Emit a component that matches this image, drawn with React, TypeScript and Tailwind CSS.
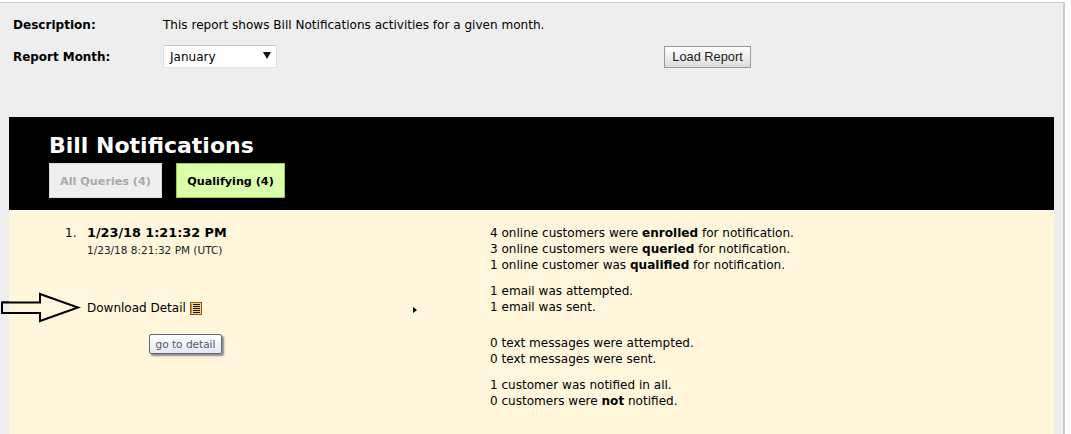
export default function App() {
  return (
    <div className="h-[434px] w-[1071px] overflow-hidden bg-white text-[12.05px] leading-[16px] text-black [font-family:'DejaVu_Sans',sans-serif]">
      <div className="relative mt-[2px] flex h-[432px] w-[1065px] flex-col border-t-[1px] border-r-[2px] border-[#cccccc] bg-[#eeeeee] pl-[9px] pr-[9px]">
        <div className="flex h-[114px] flex-col">
          <div className="mt-[14px] flex h-[16px] items-center">
            <div className="w-[154px] pl-[4px] font-bold">Description:</div>
            <div>This report shows Bill Notifications activities for a given month.</div>
          </div>
          <div className="mt-[12px] flex items-center">
            <div className="w-[154px] pl-[4px] text-[11.95px] font-bold">Report Month:</div>
            <div className="flex h-[23px] w-[114px] items-center justify-between border border-[#dde3ea] border-t-[#c4c4c4] bg-white pl-[6px] pr-[5px]">
              <span>January</span>
              <svg width="8" height="7" viewBox="0 0 8 7" className="mb-[2px]"><path d="M0 0h8L4 7z" fill="#111" /></svg>
            </div>
            <button className="ml-[387px] h-[22px] w-[87px] border border-[#999999] bg-gradient-to-b from-white to-[#dcdcdc] text-[12.8px] text-[#222] [font-family:'Liberation_Sans',sans-serif]">
              Load Report
            </button>
          </div>
        </div>
        <div className="h-[93px] bg-black pl-[40px] pt-[15px]">
          <h1 className="text-[22px] font-bold leading-[28px] text-white">Bill Notifications</h1>
          <div className="mt-[3px] flex gap-[14px]">
            <div className="flex h-[35px] w-[113px] items-center justify-center border border-[#dddddd] bg-[#eeeeee] pt-[2px] text-[11.2px] font-bold text-[#aaaaaa]">All Queries (4)</div>
            <div className="flex h-[35px] w-[109px] items-center justify-center border border-[#99cc44] bg-[#d9ffaa] pt-[2px] text-[11.2px] font-bold text-black">Qualifying (4)</div>
          </div>
        </div>
        <div className="flex flex-1 bg-[#fff6dc] pt-[15px]">
          <div className="flex w-[481px] pl-[56px]">
            <div className="w-[22px]">1.</div>
            <div>
              <div className="text-[12.8px] font-bold leading-[16px]">1/23/18 1:21:32 PM</div>
              <div className="mt-[2px] text-[10.5px] leading-[14px] text-[#222]">1/23/18 8:21:32 PM (UTC)</div>
              <div className="mt-[43px] flex items-center gap-[4px] text-[12px]">
                Download Detail
                <svg width="12" height="13" viewBox="0 0 12 13">
                  <rect x="0.5" y="0.5" width="11" height="12" fill="#f8d48a" stroke="#8a5a14" />
                  <path d="M3 2.5h7M3 4.5h7M3 6.5h7M3 8.5h7M3 10.5h7" stroke="#111" />
                  <path d="M1.5 2v9" stroke="#c98a2a" />
                </svg>
              </div>
            </div>
          </div>
          <div>
            <p>4 online customers were <b>enrolled</b> for notification.</p>
            <p>3 online customers were <b>queried</b> for notification.</p>
            <p>1 online customer was <b>qualified</b> for notification.</p>
            <p className="mt-[10px]">1 email was attempted.</p>
            <p>1 email was sent.</p>
            <p className="mt-[20px]">0 text messages were attempted.</p>
            <p>0 text messages were sent.</p>
            <p className="mt-[10px]">1 customer was notified in all.</p>
            <p>0 customers were <b>not</b> notified.</p>
          </div>
        </div>
        <svg className="absolute left-0 top-[289px]" width="82" height="32" viewBox="0 0 82 32">
          <path d="M2 10.5H40V2L78 15.5L40 29V21H2Z" fill="#fff6dc" stroke="#000" strokeWidth="2" />
          <path d="M2 10.5H9V21H2Z" fill="#eeeeee" />
          <path d="M2 10.5H9M2 21H9M2 10.5V21" stroke="#000" strokeWidth="2" fill="none" />
        </svg>
        <svg className="absolute left-[413px] top-[304px]" width="4" height="6" viewBox="0 0 4 6"><path d="M0 0L4 3L0 6Z" fill="#000" /></svg>
        <div className="absolute left-[149px] top-[331px] flex h-[20px] w-[73px] items-center justify-center rounded-[2px] border border-[#666677] bg-gradient-to-b from-white to-[#e4e8f2] text-[10.5px] text-[#555566] shadow-[2px_2px_2px_#888888]">go to detail</div>
      </div>
    </div>
  );
}
